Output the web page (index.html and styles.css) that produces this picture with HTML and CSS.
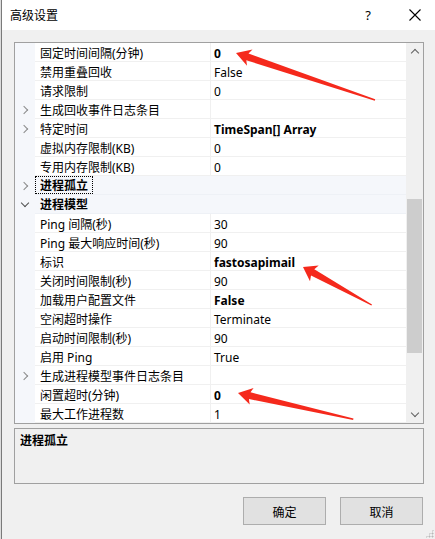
FILE: index.html
```html
<!DOCTYPE html>
<html lang="zh-CN">
<head>
    <meta charset="UTF-8">
    <title>高级设置</title>
    <link rel="stylesheet" href="styles.css">
</head>
<body>
    <div class="window">
        <div class="titlebar">
            <span class="title">高级设置</span>
            <span class="help">?</span>
            <svg class="close" width="12" height="12" viewBox="0 0 12 12">
                <path d="M0.5 0.5 L11.5 11.5 M11.5 0.5 L0.5 11.5" stroke="#000" stroke-width="1.1" fill="none"/>
            </svg>
        </div>

        <div class="content">
            <div class="grid">
                <div class="rows">
                    <div class="row"><span class="gutter"></span><span class="name">固定时间间隔(分钟)</span><span class="value bold">0</span></div>
                    <div class="row"><span class="gutter"></span><span class="name">禁用重叠回收</span><span class="value">False</span></div>
                    <div class="row"><span class="gutter"></span><span class="name">请求限制</span><span class="value">0</span></div>
                    <div class="row"><span class="gutter"><i class="chev-right"></i></span><span class="name">生成回收事件日志条目</span><span class="value"></span></div>
                    <div class="row"><span class="gutter"><i class="chev-right"></i></span><span class="name">特定时间</span><span class="value bold">TimeSpan[] Array</span></div>
                    <div class="row"><span class="gutter"></span><span class="name">虚拟内存限制(KB)</span><span class="value">0</span></div>
                    <div class="row"><span class="gutter"></span><span class="name">专用内存限制(KB)</span><span class="value">0</span></div>
                    <div class="row cat"><span class="gutter"><i class="chev-right"></i></span><span class="name"><span class="focus">进程孤立</span></span></div>
                    <div class="row cat"><span class="gutter"><i class="chev-down"></i></span><span class="name">进程模型</span></div>
                    <div class="row"><span class="gutter"></span><span class="name">Ping 间隔(秒)</span><span class="value">30</span></div>
                    <div class="row"><span class="gutter"></span><span class="name">Ping 最大响应时间(秒)</span><span class="value">90</span></div>
                    <div class="row"><span class="gutter"></span><span class="name">标识</span><span class="value bold">fastosapimail</span></div>
                    <div class="row"><span class="gutter"></span><span class="name">关闭时间限制(秒)</span><span class="value">90</span></div>
                    <div class="row"><span class="gutter"></span><span class="name">加载用户配置文件</span><span class="value bold">False</span></div>
                    <div class="row"><span class="gutter"></span><span class="name">空闲超时操作</span><span class="value">Terminate</span></div>
                    <div class="row"><span class="gutter"></span><span class="name">启动时间限制(秒)</span><span class="value">90</span></div>
                    <div class="row"><span class="gutter"></span><span class="name">启用 Ping</span><span class="value">True</span></div>
                    <div class="row"><span class="gutter"><i class="chev-right"></i></span><span class="name">生成进程模型事件日志条目</span><span class="value"></span></div>
                    <div class="row"><span class="gutter"></span><span class="name">闲置超时(分钟)</span><span class="value bold">0</span></div>
                    <div class="row"><span class="gutter"></span><span class="name">最大工作进程数</span><span class="value">1</span></div>
                </div>
                <div class="scrollbar">
                    <div class="sb-btn"><i class="sb-up"></i></div>
                    <div class="sb-track"><div class="sb-thumb"></div></div>
                    <div class="sb-btn"><i class="sb-down"></i></div>
                </div>
            </div>

            <div class="desc">进程孤立</div>

            <div class="buttons">
                <button>确定</button>
                <button>取消</button>
            </div>
        </div>
        <div class="grip"></div>
    </div>

    <!-- red annotation arrows drawn over the dialog -->
    <svg class="marks" width="435" height="539" viewBox="0 0 435 539">
        <polygon points="236,53 252.5,49.6 248.5,53.5 375.2,99.3 374.8,100.7 246.3,60.2 247,65.7" />
        <polygon points="303,267 318.7,265.4 314.3,269.2 372,304.4 371.4,305.6 311,275.4 310,281.2" />
        <polygon points="238,393 253.6,387.9 250.5,392.3 353.5,418.6 353.1,420 248.9,399.1 249.7,404.4" />
    </svg>
</body>
</html>
```

FILE: styles.css
```css
html, body {
    margin: 0;
    padding: 0;
}

body {
    width: 435px;
    height: 539px;
    overflow: hidden;
    position: relative;
    background-color: #dcdcdc;
    font-family: "Noto Sans", "Noto Sans CJK SC", sans-serif;
    font-size: 12px;
    color: #000;
}

.window {
    margin-left: 1px;
    height: 539px;
    border-left: 1px solid #7a7a7a;
    background-color: #f0f0f0;
    position: relative;
}

.titlebar {
    height: 30px;
    background-color: #fff;
    display: flex;
    align-items: center;
    padding-left: 8px;
}

.title {
    flex: 1;
    font-size: 12px;
}

.help {
    width: 14px;
    text-align: center;
    margin-right: 34px;
    font-size: 13px;
}

.close {
    margin-right: 14px;
}

.content {
    padding: 12px 11px 0 12px;
}

.grid {
    display: flex;
    height: 380px;
    border: 1px solid #a0a0a0;
    background-color: #fff;
}

.rows {
    flex: 1;
    display: flex;
    flex-direction: column;
}

.row {
    display: grid;
    grid-template-columns: 20px 175px 1fr;
    height: 19px;
}

.gutter {
    background-color: #f5f7fb;
    display: flex;
    align-items: center;
    justify-content: center;
}

.name, .value {
    height: 17px;
    padding-top: 1px;
    line-height: 19px;
    border-bottom: 1px solid #f0f0f0;
    white-space: nowrap;
    overflow: hidden;
}

.name {
    padding-left: 5px;
}

.value {
    padding-left: 3px;
    border-left: 1px solid #f0f0f0;
}

.bold {
    font-weight: bold;
}

.row.cat {
    background-color: #f5f7fb;
}

.row.cat .name {
    grid-column: 2 / 4;
    font-weight: bold;
    border-bottom: 1px solid #eef1f6;
    padding-top: 0;
    height: 18px;
    line-height: 20px;
}

.focus {
    display: inline-block;
    margin-left: -5px;
    padding: 0 4px;
    line-height: 17px;
    height: 16px;
    border: 1px dotted #000;
    vertical-align: top;
}

.chev-right, .chev-down {
    width: 5px;
    height: 5px;
    border-right: 1.5px solid #8a8a8a;
    border-bottom: 1.5px solid #8a8a8a;
}

.chev-right {
    transform: rotate(-45deg);
    margin-left: -3px;
}

.chev-down {
    transform: rotate(45deg);
    margin-top: -4px;
    border-color: #505050;
}

.scrollbar {
    width: 17px;
    background-color: #f0f0f0;
    display: flex;
    flex-direction: column;
}

.sb-btn {
    height: 17px;
    display: flex;
    align-items: center;
    justify-content: center;
}

.sb-up, .sb-down {
    width: 5px;
    height: 5px;
    border-left: 1.5px solid #606060;
    border-top: 1.5px solid #606060;
}

.sb-up {
    transform: rotate(45deg);
    margin-top: 3px;
}

.sb-down {
    transform: rotate(225deg);
    margin-top: -3px;
}

.sb-track {
    flex: 1;
    padding-top: 139px;
}

.sb-thumb {
    height: 154px;
    margin: 0 1px;
    background-color: #cdcdcd;
}

.desc {
    margin-top: 4px;
    height: 51px;
    border: 1px solid #a0a0a0;
    padding: 3px 5px 0;
    font-weight: bold;
    line-height: 18px;
}

.buttons {
    display: flex;
    justify-content: flex-end;
    gap: 14px;
    margin-top: 13px;
    padding-right: 1px;
}

button {
    width: 83px;
    height: 28px;
    background-color: #e1e1e1;
    border: 1px solid #adadad;
    font-family: "Noto Sans CJK SC", sans-serif;
    font-size: 12px;
    color: #000;
    padding: 0;
}

.grip {
    position: absolute;
    right: 1px;
    bottom: 1px;
    width: 9px;
    height: 9px;
    background-image: radial-gradient(circle, #b8b8b8 0.9px, transparent 1.1px);
    background-size: 3px 3px;
    clip-path: polygon(100% 0, 100% 100%, 0 100%);
}

.marks {
    position: absolute;
    top: 0;
    left: 0;
    pointer-events: none;
}

.marks polygon {
    fill: #f5291c;
}
```
